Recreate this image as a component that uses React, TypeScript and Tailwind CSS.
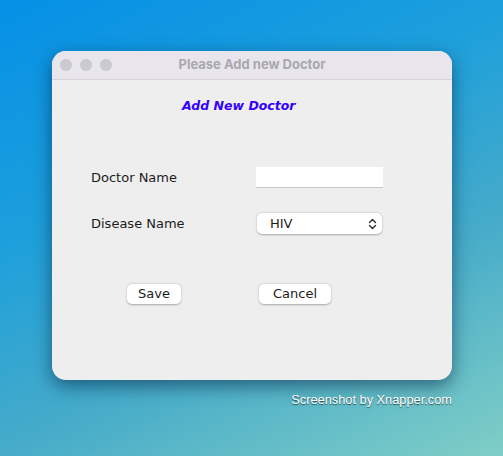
import React from "react";

export default function App() {
  return (
    <div
      className="w-[503px] h-[456px] overflow-hidden relative bg-[linear-gradient(155deg,#0590e6_0%,#1c9fdc_35%,#45abc9_65%,#80cec6_100%)]"
      style={{ fontFamily: '"DejaVu Sans", sans-serif' }}
    >
      <div className="pt-[51px] pl-[52px]">
        <div className="w-[400px] h-[329px] rounded-[14px] bg-[#eeeeee] overflow-hidden shadow-[0_6px_18px_rgba(0,30,60,0.55)] flex flex-col">
          {/* title bar */}
          <div className="h-[29px] bg-[#e8e6ec] border-b border-[#d4d3d8] flex items-center relative">
            <div className="flex gap-[8px] pl-[8px]">
              <div className="w-[12px] h-[12px] rounded-full bg-[#cbcacf]" />
              <div className="w-[12px] h-[12px] rounded-full bg-[#cbcacf]" />
              <div className="w-[12px] h-[12px] rounded-full bg-[#cbcacf]" />
            </div>
            <div
              className="absolute inset-0 flex items-center justify-center text-[13px] font-bold text-[#a9a8ae]"
              style={{ fontFamily: 'Inter, "Liberation Sans", sans-serif' }}
            >
              Please Add new Doctor
            </div>
          </div>
          {/* content */}
          <div className="flex flex-col">
            <div className="pl-[130px] pt-[20px] h-[50px] text-[12.5px] font-bold italic text-[#3300ff] leading-none">
              Add New Doctor
            </div>
            <div className="mt-[37px] flex items-center h-[21px]">
              <div className="w-[204px] pl-[39px] text-[13px] text-[#1c1c1c]">Doctor Name</div>
              <div className="w-[127px] h-[21px] bg-white border-b border-[#c8c8c8]" />
            </div>
            <div className="mt-[25px] flex items-center h-[21px]">
              <div className="w-[205px] pl-[39px] text-[13px] text-[#1c1c1c]">Disease Name</div>
              <div className="w-[125px] h-[21px] bg-white rounded-[5px] shadow-[0_0.5px_2px_rgba(0,0,0,0.3)] flex items-center justify-between pl-[13px] pr-[5px]">
                <span className="text-[13px] text-[#1c1c1c]">HIV</span>
                <svg width="9" height="12" viewBox="0 0 9 12" fill="none" stroke="#333" strokeWidth="1.5" strokeLinecap="round" strokeLinejoin="round">
                  <path d="M1.5 4.5 L4.5 1.5 L7.5 4.5" />
                  <path d="M1.5 7.5 L4.5 10.5 L7.5 7.5" />
                </svg>
              </div>
            </div>
            <div className="mt-[50px] flex items-center h-[20px]">
              <div className="ml-[75px] w-[54px] h-[20px] bg-white rounded-[5px] shadow-[0_0.5px_2px_rgba(0,0,0,0.3)] flex items-center justify-center text-[13px] text-[#1c1c1c]">
                Save
              </div>
              <div className="ml-[78px] w-[72px] h-[20px] bg-white rounded-[5px] shadow-[0_0.5px_2px_rgba(0,0,0,0.3)] flex items-center justify-center text-[13px] text-[#1c1c1c]">
                Cancel
              </div>
            </div>
          </div>
        </div>
        <div
          className="w-[400px] mt-[10px] text-right text-[12.8px] text-white [text-shadow:0_1px_1px_rgba(0,0,0,0.6)]"
          style={{ fontFamily: '"Liberation Sans", Arial, sans-serif' }}
        >
          Screenshot by Xnapper.com
        </div>
      </div>
    </div>
  );
}
